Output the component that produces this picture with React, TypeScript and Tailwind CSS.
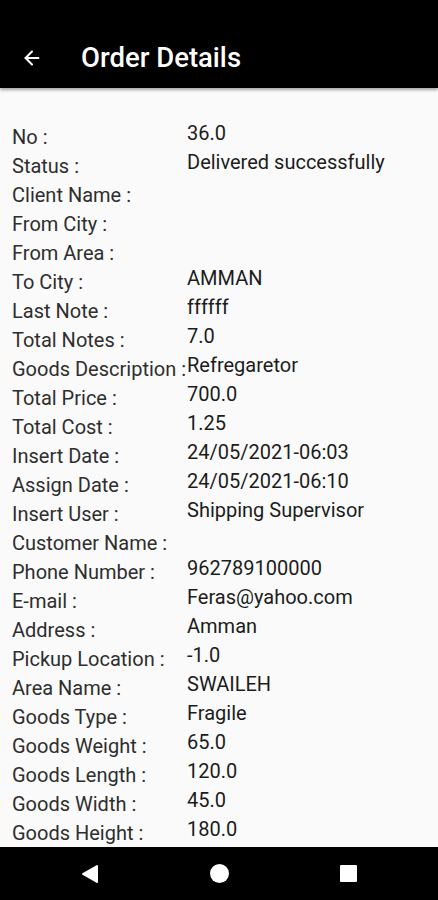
import { ArrowLeft } from "lucide-react";

const rows: [string, string][] = [
  ["No :", "36.0"],
  ["Status :", "Delivered successfully"],
  ["Client Name :", ""],
  ["From City :", ""],
  ["From Area :", ""],
  ["To City :", "AMMAN"],
  ["Last Note :", "ffffff"],
  ["Total Notes :", "7.0"],
  ["Goods Description :", "Refregaretor"],
  ["Total Price :", "700.0"],
  ["Total Cost :", "1.25"],
  ["Insert Date :", "24/05/2021-06:03"],
  ["Assign Date :", "24/05/2021-06:10"],
  ["Insert User :", "Shipping Supervisor"],
  ["Customer Name :", ""],
  ["Phone Number :", "962789100000"],
  ["E-mail :", "Feras@yahoo.com"],
  ["Address :", "Amman"],
  ["Pickup Location :", "-1.0"],
  ["Area Name :", "SWAILEH"],
  ["Goods Type :", "Fragile"],
  ["Goods Weight :", "65.0"],
  ["Goods Length :", "120.0"],
  ["Goods Width :", "45.0"],
  ["Goods Height :", "180.0"],
];

export default function App() {
  return (
    <div className="flex flex-col h-[900px] w-[438px] bg-[#fafafa] font-['Roboto',sans-serif] overflow-hidden">
      <header className="h-[88px] shrink-0 bg-black flex items-center pt-[28px] shadow-[0_2px_3px_rgba(0,0,0,0.35)] z-10">
        <ArrowLeft className="ml-[21px] w-[22px] h-[22px] text-white" strokeWidth={2.2} />
        <h1 className="ml-[38px] text-white text-[27.5px] font-medium leading-none">Order Details</h1>
      </header>
      <main className="flex-1 overflow-hidden pt-[34px] pl-[12px]">
        {rows.map(([label, value]) => (
          <div key={label} className="flex h-[29px] items-start">
            <span className="w-[175px] shrink-0 whitespace-nowrap pt-[3px] text-[20px] leading-[24px] text-[#2e2e2e]">
              {label}
            </span>
            <span className="whitespace-nowrap text-[20px] leading-[24px] -mt-[1px] text-[#1c1c1c]">{value}</span>
          </div>
        ))}
      </main>
      <nav className="h-[53px] shrink-0 bg-black flex items-center justify-center">
        <div className="w-[129px] flex justify-center">
          <svg width="18" height="20" viewBox="0 0 18 20">
            <path d="M16 2 L2 10 L16 18 Z" fill="white" stroke="white" strokeWidth="2" strokeLinejoin="round" />
          </svg>
        </div>
        <div className="w-[129px] flex justify-center">
          <div className="w-[19px] h-[19px] rounded-full bg-white" />
        </div>
        <div className="w-[129px] flex justify-center">
          <div className="w-[17px] h-[17px] bg-white rounded-[1px]" />
        </div>
      </nav>
    </div>
  );
}
